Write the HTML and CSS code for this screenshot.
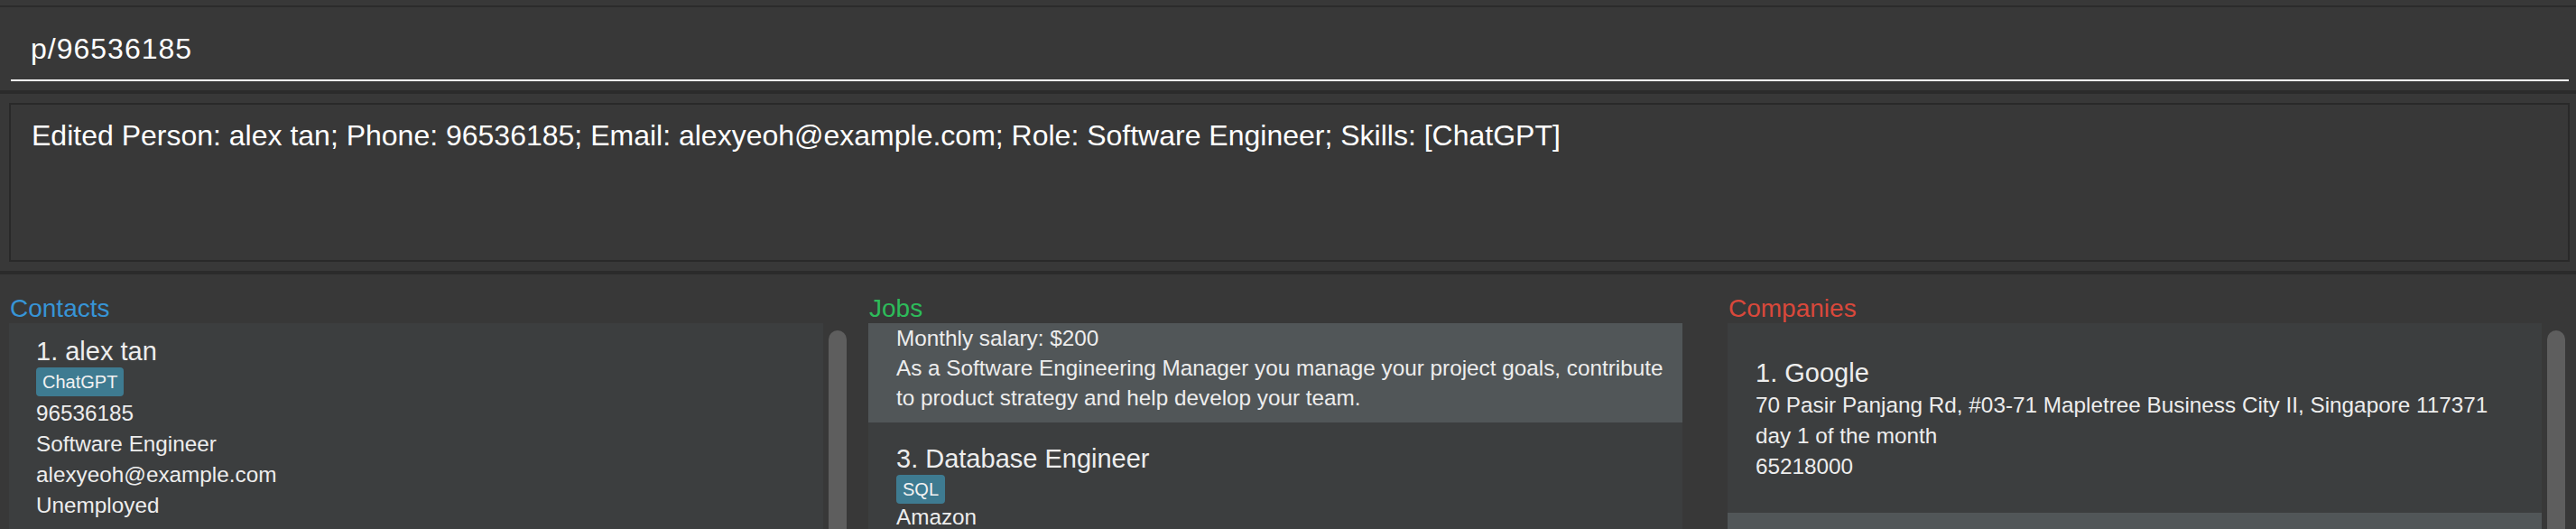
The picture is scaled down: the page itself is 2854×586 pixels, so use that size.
FILE: index.html
```html
<!DOCTYPE html>
<html>
<head>
<meta charset="utf-8">
<title>Address Book</title>
<link rel="stylesheet" href="styles.css">
</head>
<body>
<div class="app">
  <div class="command-pane">
    <div class="command-input">p/96536185</div>
  </div>
  <div class="result-pane">
    <div class="result-box">Edited Person: alex tan; Phone: 96536185; Email: alexyeoh@example.com; Role: Software Engineer; Skills: [ChatGPT]</div>
  </div>
  <div class="lists">
    <section class="col">
      <h2 class="title title-contacts">Contacts</h2>
      <div class="list-row">
        <div class="list">
          <div class="card even card-contact">
            <div class="name">1. alex tan</div>
            <div class="tags"><span class="tag">ChatGPT</span></div>
            <div class="details">
              <div class="line">96536185</div>
              <div class="line">Software Engineer</div>
              <div class="line">alexyeoh@example.com</div>
              <div class="line">Unemployed</div>
            </div>
          </div>
        </div>
        <div class="scrollbar"><div class="thumb"></div></div>
      </div>
    </section>
    <section class="col">
      <h2 class="title title-jobs">Jobs</h2>
      <div class="list-row">
        <div class="list">
          <div class="card odd card-job-partial">
            <div class="line-tight">Monthly salary: $200</div>
            <div class="line-tight desc">As a Software Engineering Manager you manage your project goals, contribute to product strategy and help develop your team.</div>
          </div>
          <div class="card even card-job">
            <div class="name">3. Database Engineer</div>
            <div class="tags"><span class="tag">SQL</span></div>
            <div class="details details-job">
              <div class="line">Amazon</div>
            </div>
          </div>
        </div>
      </div>
    </section>
    <section class="col">
      <h2 class="title title-companies">Companies</h2>
      <div class="list-row">
        <div class="list">
          <div class="card even card-company">
            <div class="name">1. Google</div>
            <div class="details details-company">
              <div class="line">70 Pasir Panjang Rd, #03-71 Mapletree Business City II, Singapore 117371</div>
              <div class="line">day 1 of the month</div>
              <div class="line">65218000</div>
            </div>
          </div>
          <div class="card odd card-company-next"></div>
        </div>
        <div class="scrollbar"><div class="thumb"></div></div>
      </div>
    </section>
  </div>
</div>
</body>
</html>
```
FILE: styles.css
```css
* { box-sizing: border-box; }

html, body {
  margin: 0;
  padding: 0;
}

body {
  background: #383838;
  width: 2854px;
  height: 586px;
  overflow: hidden;
  font-family: "Liberation Sans", Arial, sans-serif;
  color: #ffffff;
}

.app {
  padding-top: 6px;
  height: 586px;
  overflow: hidden;
}

/* command box */
.command-pane {
  border-top: 2px solid #2b2b2b;
  height: 94px;
  padding: 0 8px 0 12px;
}

.command-input {
  margin-top: 26px;
  font-size: 32px;
  letter-spacing: 1px;
  line-height: 40px;
  padding-left: 22px;
  padding-bottom: 14px;
  border-bottom: 2px solid #ffffff;
  white-space: nowrap;
}

/* result display */
.result-pane {
  border-top: 4px solid #2b2b2b;
  height: 200px;
  padding: 10px 7px 10px 10px;
}

.result-box {
  height: 176px;
  border: 2px solid #292929;
  padding: 14px 23px;
  font-size: 32px;
  line-height: 40px;
  white-space: nowrap;
}

/* lists */
.lists {
  border-top: 4px solid #2b2b2b;
  display: grid;
  grid-template-columns: repeat(3, 952px);
  height: 286px;
  overflow: hidden;
}

.col {
  padding: 21px 0 0 10px;
  display: flex;
  flex-direction: column;
  min-width: 0;
  min-height: 0;
  overflow: hidden;
}

.title {
  margin: 0;
  padding-left: 1px;
  font-size: 28px;
  font-weight: normal;
  line-height: 33px;
}

.title-contacts { color: #3794d6; }
.title-jobs { color: #2dbb5a; }
.title-companies { color: #d9483b; }

.list-row {
  display: flex;
  flex: 1;
  min-height: 0;
  overflow: hidden;
}

.list {
  width: 902px;
  background: #3c3e3f;
  overflow: hidden;
}

.scrollbar {
  width: 20px;
  margin-left: 6px;
  padding-top: 8px;
  overflow: hidden;
}

.thumb {
  height: 300px;
  background: #5e5e5e;
  border-radius: 10px;
}

/* cards */
.card {
  padding-left: 31px;
  color: #ededed;
}

.card.even { background: #3c3e3f; }
.card.odd { background: #515658; }

.name {
  font-size: 29px;
  line-height: 36px;
  white-space: nowrap;
}

.tags {
  display: flex;
  gap: 8px;
  height: 32px;
}

.tag {
  display: inline-block;
  background: #3e7b91;
  color: #f2f2f2;
  font-size: 20px;
  line-height: 32px;
  padding: 0 7px;
  border-radius: 4px;
}

.details {
  margin-top: 2px;
}

.line {
  font-size: 24.3px;
  line-height: 34px;
  white-space: nowrap;
}

.line-tight {
  font-size: 24.3px;
  line-height: 33px;
}

.desc {
  width: 852px;
}

.card-contact {
  padding-top: 13px;
  padding-left: 30px;
  height: 228px;
}

.card-job-partial {
  padding-top: 0;
  padding-bottom: 11px;
}

.card-job {
  padding-top: 22px;
  height: 200px;
}

.details-job {
  margin-top: 0;
}

.details-job .line {
  line-height: 30px;
}

.card-company {
  padding-top: 37px;
  padding-bottom: 34px;
}

.details-company {
  margin-top: 1px;
}

.card-company-next {
  height: 120px;
}
```
